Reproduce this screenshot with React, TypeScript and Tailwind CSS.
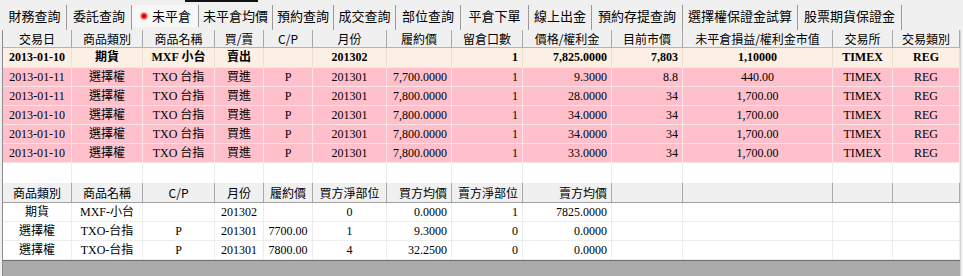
import React from "react";

const tabs = [
  { label: "財務查詢", w: "w-[64px]" },
  { label: "委託查詢", w: "w-[65px]" },
  { label: "未平倉", w: "w-[67px]", active: true },
  { label: "未平倉均價", w: "w-[74px]" },
  { label: "預約查詢", w: "w-[61px]" },
  { label: "成交查詢", w: "w-[62px]" },
  { label: "部位查詢", w: "w-[65px]" },
  { label: "平倉下單", w: "w-[68px]" },
  { label: "線上出金", w: "w-[63px]" },
  { label: "預約存提查詢", w: "w-[91px]" },
  { label: "選擇權保證金試算", w: "w-[115px]" },
  { label: "股票期貨保證金", w: "w-[104px]" },
];

const grid =
  "grid grid-cols-[69px_71px_72px_49px_49px_74px_65px_71px_89px_71px_150px_60px_67px]";

const topHead = [
  "交易日", "商品類別", "商品名稱", "買/賣", "C/P", "月份", "履約價",
  "留倉口數", "價格/權利金", "目前市價", "未平倉損益/權利金市值", "交易所", "交易類別",
];
const topAlign = ["c", "c", "c", "c", "c", "c", "r", "r", "r", "r", "c", "c", "c"];

const futuresRow = [
  "2013-01-10", "期貨", "MXF 小台", "賣出", "", "201302", "", "1",
  "7,825.0000", "7,803", "1,10000", "TIMEX", "REG",
];

const optionRows = [
  ["2013-01-11", "7,700.0000", "9.3000", "8.8", "440.00"],
  ["2013-01-11", "7,800.0000", "28.0000", "34", "1,700.00"],
  ["2013-01-10", "7,800.0000", "34.0000", "34", "1,700.00"],
  ["2013-01-10", "7,800.0000", "34.0000", "34", "1,700.00"],
  ["2013-01-10", "7,800.0000", "33.0000", "34", "1,700.00"],
].map(([d, strike, price, mkt, pl]) => [
  d, "選擇權", "TXO 台指", "買進", "P", "201301", strike, "1", price, mkt, pl, "TIMEX", "REG",
]);

const botHead = [
  "商品類別", "商品名稱", "C/P", "月份", "履約價", "買方淨部位", "買方均價",
  "賣方淨部位", "賣方均價", "", "", "", "",
];
const botHeadAlign = ["c", "c", "c", "c", "c", "c", "r", "r", "r", "c", "c", "c", "c"];
const botAlign = ["c", "c", "c", "c", "c", "c", "r", "r", "r", "c", "c", "c", "c"];

const botRows = [
  ["期貨", "MXF-小台", "", "201302", "", "0", "0.0000", "1", "7825.0000", "", "", "", ""],
  ["選擇權", "TXO-台指", "P", "201301", "7700.00", "1", "9.3000", "0", "0.0000", "", "", "", ""],
  ["選擇權", "TXO-台指", "P", "201301", "7800.00", "4", "32.2500", "0", "0.0000", "", "", "", ""],
];

const sans = "font-['Noto_Sans_CJK_TC','Noto_Sans',sans-serif]";
const serif = "font-['Liberation_Serif','Noto_Sans_CJK_TC',serif]";

function alignCls(a: string) {
  if (a === "r") return "text-right pr-[4px]";
  if (a === "l") return "text-left pl-[4px]";
  return "text-center";
}

function RadioDot() {
  return (
    <svg width="10" height="10" viewBox="0 0 10 10" className="shrink-0">
      <circle cx="5" cy="5" r="4.5" fill="#ffc8c8" />
      <circle cx="5" cy="5" r="3" fill="#f03030" />
      <circle cx="5" cy="5" r="1.6" fill="#c00000" />
    </svg>
  );
}

export default function App() {
  return (
    <div className="w-[963px] h-[276px] overflow-hidden bg-[#f0f0f0] text-black">
      {/* strip above the tabs */}
      <div className="h-[5px]">
        <div className="ml-[185px] w-[73px] h-[2px] bg-[#111]" />
      </div>

      {/* tab bar */}
      <div className={`h-[25px] flex pl-[3px] ${sans} text-[13px]`}>
        {tabs.map((t) =>
          t.active ? (
            <div
              key={t.label}
              className={`${t.w} h-[22px] flex items-center justify-center gap-[3px] leading-[20px] border-r border-[#9a9a9a] bg-[#f7f7f7]`}
            >
              <RadioDot />
              <span className="whitespace-nowrap">{t.label}</span>
            </div>
          ) : (
            <div
              key={t.label}
              className={`${t.w} h-full flex justify-center pt-[1px] leading-[20px] border-r border-[#9a9a9a]`}
            >
              <span className="whitespace-nowrap">{t.label}</span>
            </div>
          )
        )}
      </div>

      {/* grid area */}
      <div className="ml-[2px] w-[959px] border-l border-l-[#8c8c8c] border-r border-r-[#d6d6d6] bg-white">
        {/* top header */}
        <div className={`${grid} h-[18px] bg-[#f0f0f0] border-b border-[#b4b4b4] ${sans} text-[12px] leading-[17px]`}>
          {topHead.map((h, i) => (
            <div key={i} className="text-center whitespace-nowrap overflow-hidden border-r border-[#a8a8a8]">
              {h}
            </div>
          ))}
        </div>

        {/* futures row */}
        <div className={`${grid} h-[19px] bg-[#fcf0e4] ${serif} text-[12px] leading-[19px] font-bold`}>
          {futuresRow.map((c, i) => (
            <div key={i} className={`${alignCls(topAlign[i])} whitespace-nowrap overflow-hidden border-r border-[#ece0d4]`}>
              {c}
            </div>
          ))}
        </div>

        {/* option rows */}
        {optionRows.map((row, r) => (
          <div key={r} className={`${grid} h-[19px] bg-[#ffc0cb] border-t border-[#fbe4e8] ${serif} text-[12px] leading-[18px]`}>
            {row.map((c, i) => (
              <div key={i} className={`${alignCls(topAlign[i])} whitespace-nowrap overflow-hidden border-r border-[#fde6ea]`}>
                {c}
              </div>
            ))}
          </div>
        ))}

        {/* blank row */}
        <div className={`${grid} h-[21px] border-t border-[#fbe4e8]`}>
          {topHead.map((_, i) => (
            <div key={i} className="border-r border-[#ececec]" />
          ))}
        </div>

        {/* bottom header */}
        <div className={`${grid} h-[20px] bg-[#f0f0f0] border-b border-[#a0a0a0] ${sans} text-[12px] leading-[19px]`}>
          {botHead.map((h, i) => (
            <div key={i} className={`${alignCls(botHeadAlign[i])} whitespace-nowrap overflow-hidden border-r border-[#a8a8a8]`}>
              {h}
            </div>
          ))}
        </div>

        {/* bottom rows */}
        {botRows.map((row, r) => (
          <div key={r} className={`${grid} h-[19px] border-b border-[#ededed] ${serif} text-[12px] leading-[18px]`}>
            {row.map((c, i) => (
              <div key={i} className={`${alignCls(botAlign[i])} whitespace-nowrap overflow-hidden border-r border-[#ececec]`}>
                {c}
              </div>
            ))}
          </div>
        ))}

        {/* empty gray area */}
        <div className="h-[16px] bg-[#ababab] border-t border-[#6e6e6e]" />
      </div>
    </div>
  );
}
